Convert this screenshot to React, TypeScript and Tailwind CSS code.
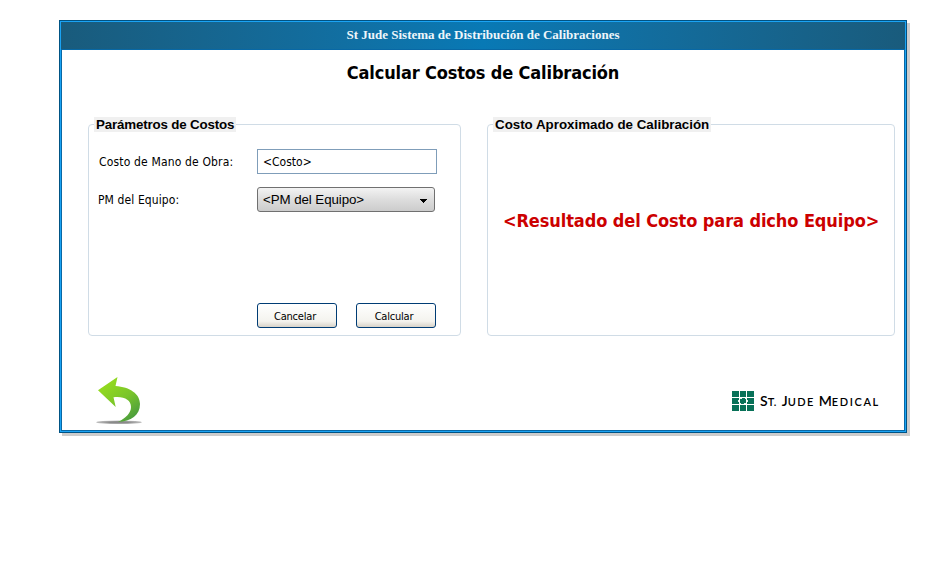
import React from "react";

const tahoma = "font-['DejaVu_Sans_Condensed','DejaVu_Sans',sans-serif] [font-stretch:condensed]";
const arial = "font-['Liberation_Sans',Arial,sans-serif]";

function Panel({ title, titleClass, className, children }: { title: string; titleClass: string; className: string; children: React.ReactNode }) {
  return (
    <fieldset className={`h-[219px] rounded-[4px] border border-[#d0dce6] ${className}`}>
      <legend className={`ml-[5px] h-[15px] whitespace-nowrap bg-[#f0f0f0] pl-[2px] text-[13.33px] font-bold leading-[15px] text-black ${arial} ${titleClass}`}>
        {title}
      </legend>
      {children}
    </fieldset>
  );
}

function ActionButton({ children }: { children: React.ReactNode }) {
  return (
    <button className={`h-[25px] w-[80px] whitespace-nowrap rounded-[3px] border border-[#003c74] bg-linear-to-b from-white via-[#f4f3ee] via-75% to-[#d8d3c8] pr-[4px] pt-[2px] text-[11px] leading-[21px] tracking-[-0.2px] text-black ${tahoma}`}>
      {children}
    </button>
  );
}

function BackArrow() {
  return (
    <svg width="50" height="52" viewBox="0 0 50 52" className="block">
      <defs>
        <linearGradient id="leaf" x1="0" y1="0" x2="0.75" y2="1">
          <stop offset="0.2" stopColor="#92d91f" />
          <stop offset="0.6" stopColor="#7ac52a" />
          <stop offset="1" stopColor="#4a9c3e" />
        </linearGradient>
        <radialGradient id="floor">
          <stop offset="0.4" stopColor="#8a8a8a" />
          <stop offset="1" stopColor="#a5a5a5" stopOpacity="0.7" />
        </radialGradient>
      </defs>
      <ellipse cx="24" cy="47.3" rx="23" ry="1.8" fill="url(#floor)" />
      <path d="M3 15.3 L22.5 2 L20.5 11 C35 12 45 19 45 29 C45 40 36 46.5 23 47 C31 43 36 38 36 32 C36 25 29 21 18.5 22.3 L20.7 32 Z" fill="url(#leaf)" />
    </svg>
  );
}

function Logo() {
  return (
    <div className="flex items-center">
      <svg width="22" height="20" viewBox="0 0 22 20" className="block" shapeRendering="crispEdges">
        <path fill="#087158" d="M0 0h7v6H0zM8 0h6v6H8zM15 0h7v6h-7zM0 7h7v6H0zM8 7h6v6H8zM15 7h7v6h-7zM0 14h7v6H0zM8 14h6v6H8zM15 14h7v6h-7z" />
        <path fill="#e8f3ef" d="M8 7h2v1H8zM13 7h1v1h-1zM8 12h1v1H8zM12 12h2v1h-2zM6 9h1v2H6zM15 9h1v2h-1z" />
      </svg>
      <span className="ml-[6px] mt-[1px] flex items-baseline whitespace-nowrap font-['Lato',sans-serif] text-[11px] font-semibold leading-[19px] text-black">
        <span className="text-[14px]">S</span><span className="tracking-[0.3px]">T.</span>
        <span className="ml-[5px] text-[14px]">J</span><span className="tracking-[1.4px]">UDE</span>
        <span className="ml-[4px] text-[14px]">M</span><span className="tracking-[1.6px]">EDICAL</span>
      </span>
    </div>
  );
}

export default function App() {
  return (
    <div className="h-[579px] w-[945px] bg-white pl-[59px] pt-[20px] text-black">
      <div className="h-[413px] w-[848px] border border-[#005384] shadow-[3px_3px_0_#cccccc]">
        <div className="flex h-full flex-col border border-[#1aa3f4]">
          <header className="h-[28px] shrink-0 border-b border-[#0868a5] bg-linear-to-r from-[#195b7c] via-[#0879b5] to-[#195b7c] text-center font-['Liberation_Serif',serif] text-[13px] font-bold leading-[26px] text-[#eef6fa]">
            <span className="whitespace-nowrap">St Jude Sistema de Distribución de Calibraciones</span>
          </header>
          <main className="flex flex-1 flex-col border-x border-b border-[#0868a5]">
            <h1 className={`mt-[11px] h-[24px] whitespace-nowrap text-center text-[18px] font-bold leading-[24px] tracking-[-0.15px] ${tahoma}`}>Calcular Costos de Calibración</h1>
            <div className="mt-[32px] flex gap-[26px] pl-[26px]">
              <Panel title="Parámetros de Costos" titleClass="w-[142px] tracking-[-0.16px]" className="w-[373px]">
                <div className={`grid grid-cols-[159px_180px] gap-y-[13px] pl-[9px] pt-[17px] text-[12px] leading-[25px] ${tahoma}`}>
                  <label className="pl-[1px] pt-[1px] leading-[24px] tracking-[0.16px]">Costo de Mano de Obra:</label>
                  <div className="h-[25px] border border-[#7f9db9] pl-[5px] pt-[1px] leading-[22px]">&lt;Costo&gt;</div>
                  <label className="pt-[1px] leading-[24px] tracking-[0.1px]">PM del Equipo:</label>
                  <div className={`flex h-[25px] w-[178px] items-center justify-between rounded-[3px] border border-[#707070] bg-linear-to-b from-[#f3f3f3] via-[#dddddd] to-[#cccccc] pl-[5px] pr-[7px] text-[13.33px] leading-[23px] tracking-[-0.08px] ${arial}`}>
                    <span>&lt;PM del Equipo&gt;</span>
                    <svg width="7" height="4" viewBox="0 0 7 4" className="mt-[3px]" shapeRendering="crispEdges"><path d="M0 0H7L3.5 4Z" /></svg>
                  </div>
                </div>
                <div className="mt-[91px] flex gap-[19px] pl-[168px]">
                  <ActionButton>Cancelar</ActionButton>
                  <ActionButton>Calcular</ActionButton>
                </div>
              </Panel>
              <Panel title="Costo Aproximado de Calibración" titleClass="w-[218px]" className="w-[408px]">
                <p className={`mt-[77px] whitespace-nowrap pl-[15px] text-[18px] font-bold leading-[24px] tracking-[-0.09px] text-[#cc0000] ${tahoma}`}>
                  &lt;Resultado del Costo para dicho Equipo&gt;
                </p>
              </Panel>
            </div>
            <footer className="mt-[39px] flex items-start justify-between pl-[33px] pr-[22px]">
              <BackArrow />
              <div className="mt-[15px] w-[150px]"><Logo /></div>
            </footer>
          </main>
        </div>
      </div>
    </div>
  );
}
